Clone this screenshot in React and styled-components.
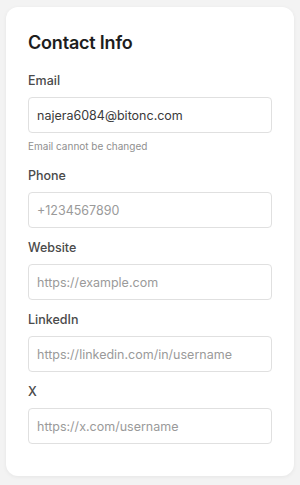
import React from "react";
import styled, { createGlobalStyle } from "styled-components";

const GlobalStyle = createGlobalStyle`
  html, body {
    margin: 0;
    background: #f3f3f3;
    font-family: Inter, "Noto Sans", sans-serif;
  }
  * { box-sizing: border-box; }
`;

const Page = styled.div`
  padding: 7px 6px 8px;
`;

const Card = styled.section`
  background: #fff;
  border-radius: 12px;
  box-shadow: 0 1px 4px rgba(0, 0, 0, 0.06);
  padding: 24px 22px 32px;
  display: flex;
  flex-direction: column;
`;

const Title = styled.h2`
  margin: 0 0 18px;
  font-size: 18px;
  line-height: 24px;
  font-weight: 600;
  color: #1d1d1d;
  letter-spacing: -0.2px;
`;

const Fields = styled.div`
  display: flex;
  flex-direction: column;
  gap: 12px;
`;

const Field = styled.div`
  display: flex;
  flex-direction: column;
`;

const Label = styled.label`
  font-size: 12.5px;
  line-height: 16px;
  font-weight: 500;
  color: #4a4a4a;
  margin-bottom: 8px;
`;

const Input = styled.input`
  height: 36px;
  width: 100%;
  border: 1px solid #e0e0e0;
  border-radius: 4px;
  padding: 0 8px;
  font-family: inherit;
  font-size: 12.5px;
  color: #3a3a3a;
  background: #fff;
  outline: none;

  &::placeholder {
    color: #9a9a9a;
  }
`;

const Hint = styled.p`
  margin: 5px 0 2px;
  font-size: 10px;
  line-height: 16px;
  color: #8f8f8f;
`;

const fields = [
  { name: "Phone", placeholder: "+1234567890" },
  { name: "Website", placeholder: "https://example.com" },
  { name: "LinkedIn", placeholder: "https://linkedin.com/in/username" },
  { name: "X", placeholder: "https://x.com/username" },
];

const App = () => {
  return (
    <Page>
      <GlobalStyle />
      <Card>
        <Title>Contact Info</Title>
        <Fields>
          <Field>
            <Label>Email</Label>
            <Input defaultValue="najera6084@bitonc.com" readOnly />
            <Hint>Email cannot be changed</Hint>
          </Field>
          {fields.map((f) => (
            <Field key={f.name}>
              <Label>{f.name}</Label>
              <Input placeholder={f.placeholder} />
            </Field>
          ))}
        </Fields>
      </Card>
    </Page>
  );
};

export default App;
